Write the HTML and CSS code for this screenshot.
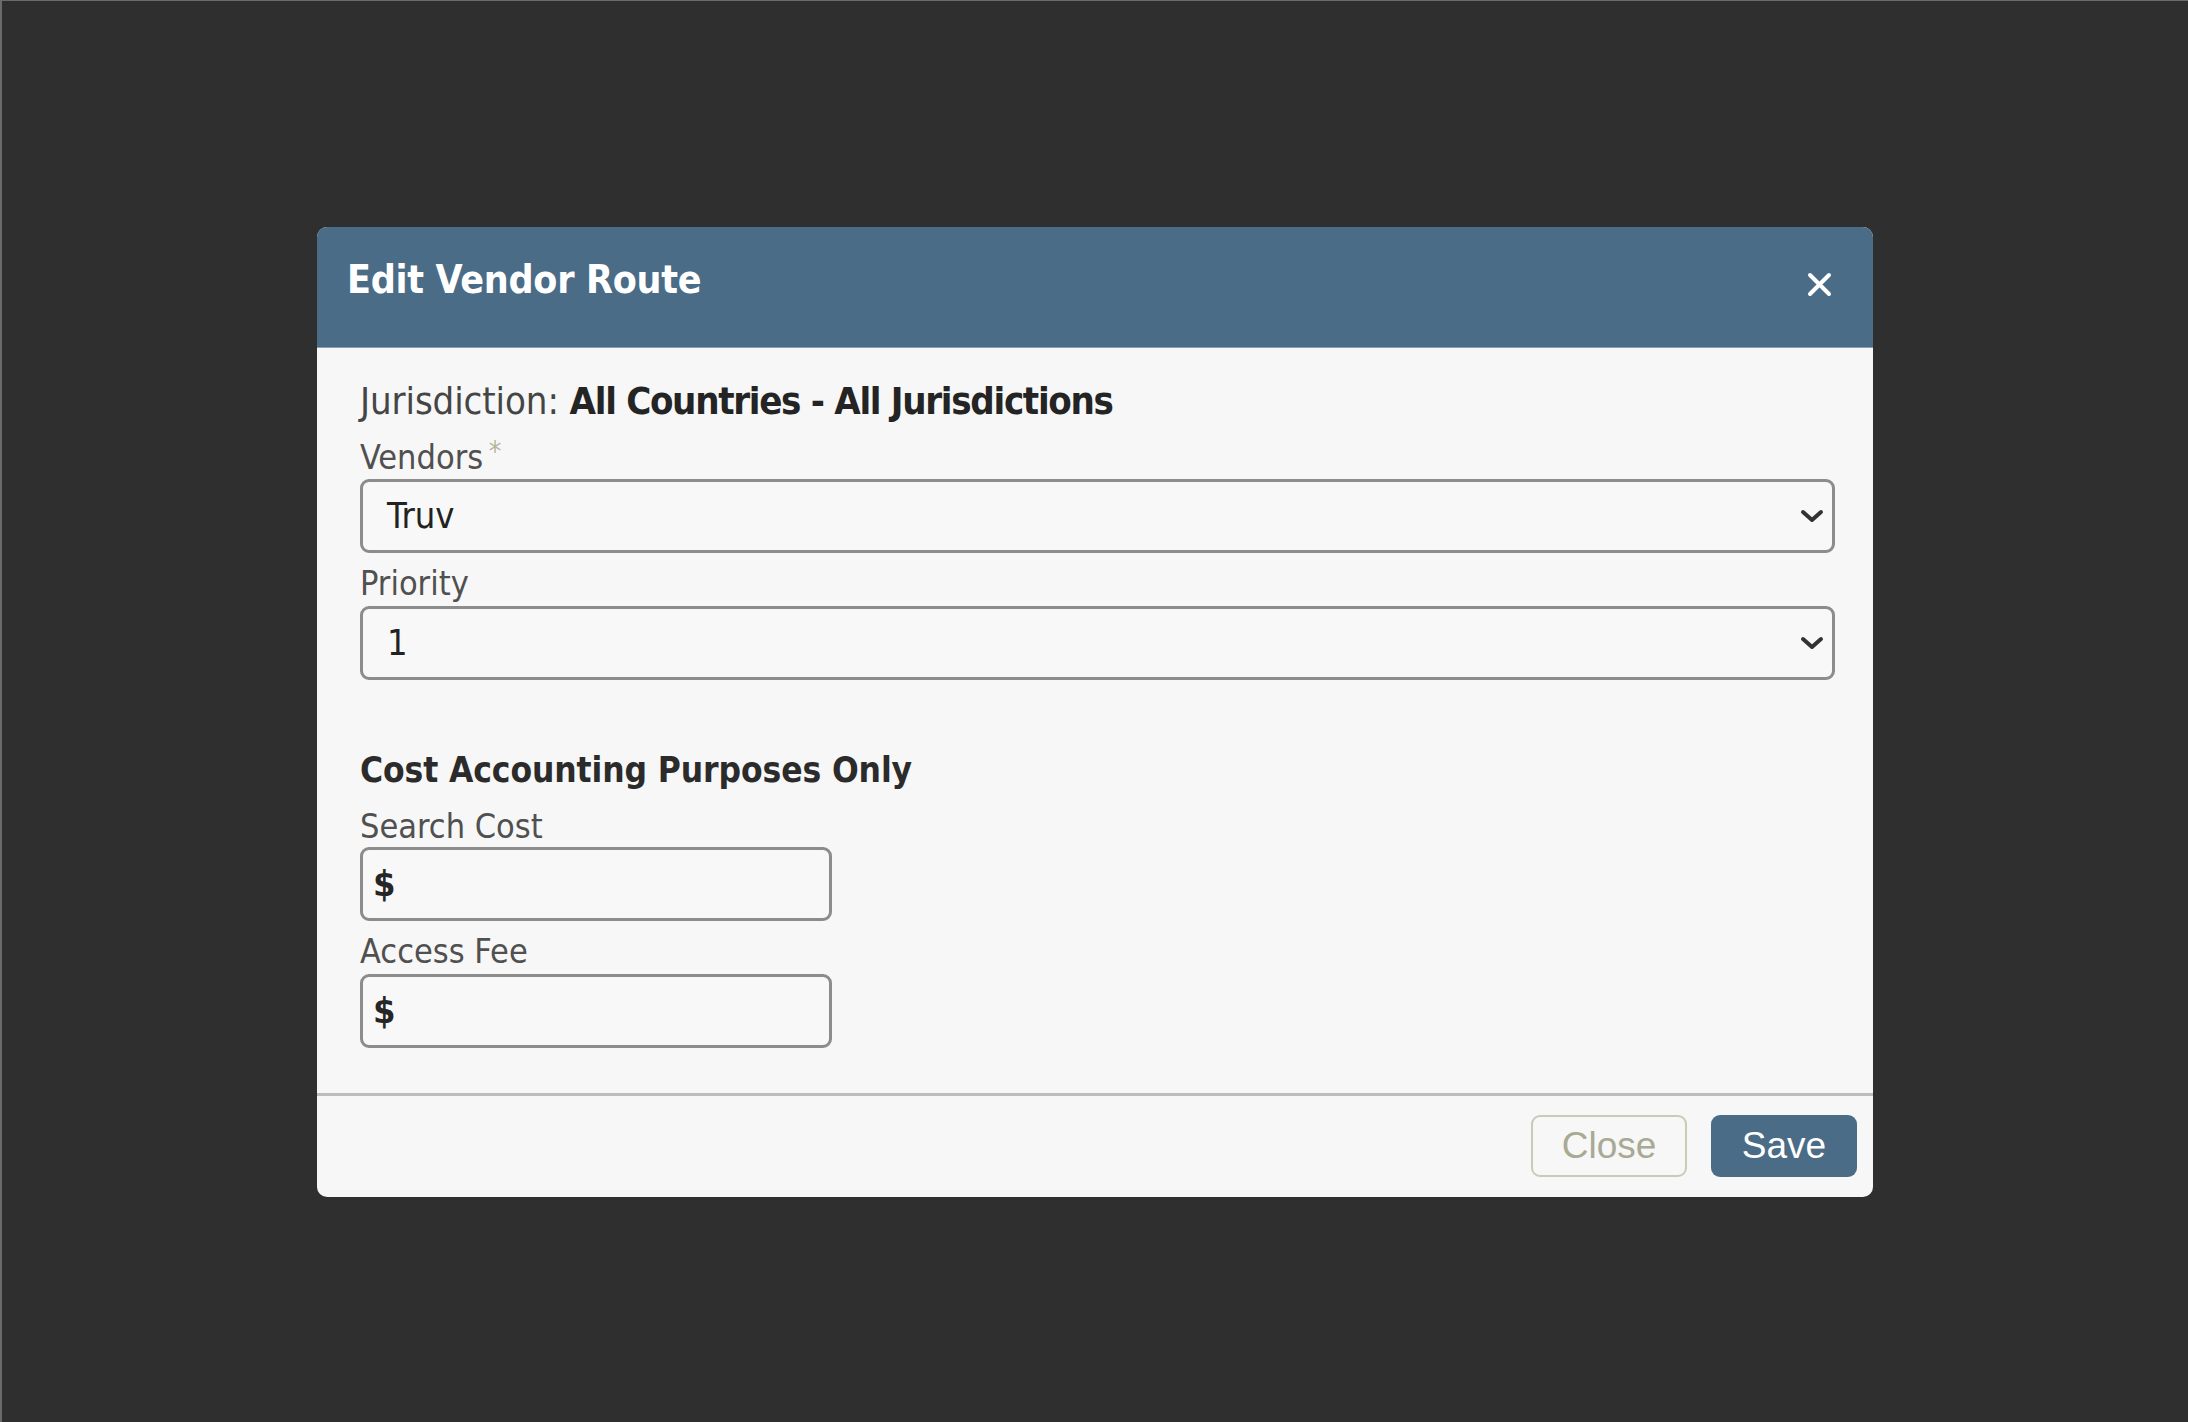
FILE: index.html
```html
<!DOCTYPE html>
<html lang="en">
<head>
<meta charset="utf-8">
<title>Edit Vendor Route</title>
<link rel="stylesheet" href="styles.css">
</head>
<body>
<div class="backdrop">
  <div class="modal">
    <div class="modal-header">
      <h1 class="modal-title">Edit Vendor Route</h1>
      <button class="close-x" aria-label="Close">
        <svg width="25" height="25" viewBox="0 0 25 25"><path d="M3 3 L22 22 M22 3 L3 22" stroke="#ffffff" stroke-width="4" stroke-linecap="round" fill="none"/></svg>
      </button>
    </div>
    <div class="modal-body">
      <div class="jurisdiction">Jurisdiction: <strong>All Countries - All Jurisdictions</strong></div>
      <div class="label label-first">Vendors <span class="req">*</span></div>
      <div class="select-box">
        <span class="select-value">Truv</span>
        <svg class="chev" width="24" height="14" viewBox="0 0 24 14"><path d="M3 3 L12 11 L21 3" stroke="#333333" stroke-width="4" fill="none" stroke-linecap="round" stroke-linejoin="round"/></svg>
      </div>
      <div class="label">Priority</div>
      <div class="select-box">
        <span class="select-value">1</span>
        <svg class="chev" width="24" height="14" viewBox="0 0 24 14"><path d="M3 3 L12 11 L21 3" stroke="#333333" stroke-width="4" fill="none" stroke-linecap="round" stroke-linejoin="round"/></svg>
      </div>
      <h2 class="section-heading">Cost Accounting Purposes Only</h2>
      <div class="label label-tight">Search Cost</div>
      <div class="money-input"><span class="dollar">$</span></div>
      <div class="label">Access Fee</div>
      <div class="money-input"><span class="dollar">$</span></div>
    </div>
    <div class="modal-footer">
      <button class="btn btn-close">Close</button>
      <button class="btn btn-save">Save</button>
    </div>
  </div>
</div>
</body>
</html>
```
FILE: styles.css
```css
html, body {
  margin: 0;
  padding: 0;
}

body {
  background: #2f2f2f;
  font-family: "DejaVu Sans Condensed", "DejaVu Sans", sans-serif;
  font-stretch: condensed;
}

.backdrop {
  box-sizing: border-box;
  width: 2188px;
  height: 1422px;
  display: flex;
  align-items: center;
  justify-content: center;
  border-top: 1px solid #6b6b6b;
  border-left: 2px solid #6b6b6b;
}

.modal {
  width: 1556px;
  height: 970px;
  background: #f7f7f7;
  border-radius: 10px;
  overflow: hidden;
  display: flex;
  flex-direction: column;
}

.modal-header {
  height: 121px;
  box-sizing: border-box;
  background: #4b6c87;
  display: flex;
  justify-content: space-between;
  align-items: flex-start;
  padding: 33px 41px 0 30px;
  border-bottom: 1px solid #8aa0b2;
}

.modal-title {
  margin: 0;
  color: #ffffff;
  font-size: 39px;
  line-height: 39px;
  font-weight: bold;
  letter-spacing: -0.3px;
}

.close-x {
  margin-top: 12px;
  padding: 0;
  border: 0;
  background: none;
  width: 25px;
  height: 25px;
  display: flex;
}

.modal-body {
  flex: 1;
  padding: 31px 38px 0 43px;
  display: flex;
  flex-direction: column;
  align-items: flex-start;
}

.jurisdiction {
  height: 44px;
  line-height: 44px;
  font-size: 38px;
  color: #454545;
  letter-spacing: -0.1px;
}

.jurisdiction strong {
  color: #242424;
  letter-spacing: -1.3px;
}

.label {
  height: 40px;
  line-height: 40px;
  font-size: 34px;
  color: #505050;
  margin-top: 10px;
  margin-bottom: 3px;
}

.label-first {
  margin-top: 9px;
  margin-bottom: 7px;
}

.label-tight {
  margin-top: 14px;
  margin-bottom: 1px;
}

.req {
  color: #b4b79d;
  font-size: 28px;
  vertical-align: 8px;
  margin-left: -4px;
}

.select-box {
  box-sizing: border-box;
  width: 1475px;
  height: 74px;
  border: 3px solid #8c8c8c;
  border-radius: 9px;
  background: #f8f8f8;
  display: flex;
  align-items: center;
  justify-content: space-between;
  padding: 0 8px 0 24px;
}

.select-value {
  font-size: 36px;
  color: #222222;
}

.chev {
  display: block;
}

.section-heading {
  margin: 68px 0 0 0;
  height: 44px;
  line-height: 44px;
  font-size: 35px;
  font-weight: bold;
  color: #2b2b2b;
  letter-spacing: -0.1px;
}

.money-input {
  box-sizing: border-box;
  width: 472px;
  height: 74px;
  border: 3px solid #8c8c8c;
  border-radius: 9px;
  background: #f8f8f8;
  display: flex;
  align-items: center;
  padding-left: 10px;
}

.dollar {
  font-size: 36px;
  font-weight: bold;
  color: #262626;
}

.modal-footer {
  height: 104px;
  box-sizing: border-box;
  border-top: 3px solid #bdbdbd;
  display: flex;
  justify-content: flex-end;
  align-items: center;
  gap: 24px;
  padding: 0 16px 0 0;
}

.btn {
  height: 62px;
  box-sizing: border-box;
  font-family: "Liberation Sans", Arial, sans-serif;
  font-size: 37px;
  border-radius: 9px;
  padding: 0;
  display: flex;
  align-items: center;
  justify-content: center;
}

.btn-close {
  width: 156px;
  background: transparent;
  border: 2px solid #c9cab7;
  color: #a8aa94;
}

.btn-save {
  width: 146px;
  background: #4b6c87;
  border: 0;
  color: #ffffff;
}
```
